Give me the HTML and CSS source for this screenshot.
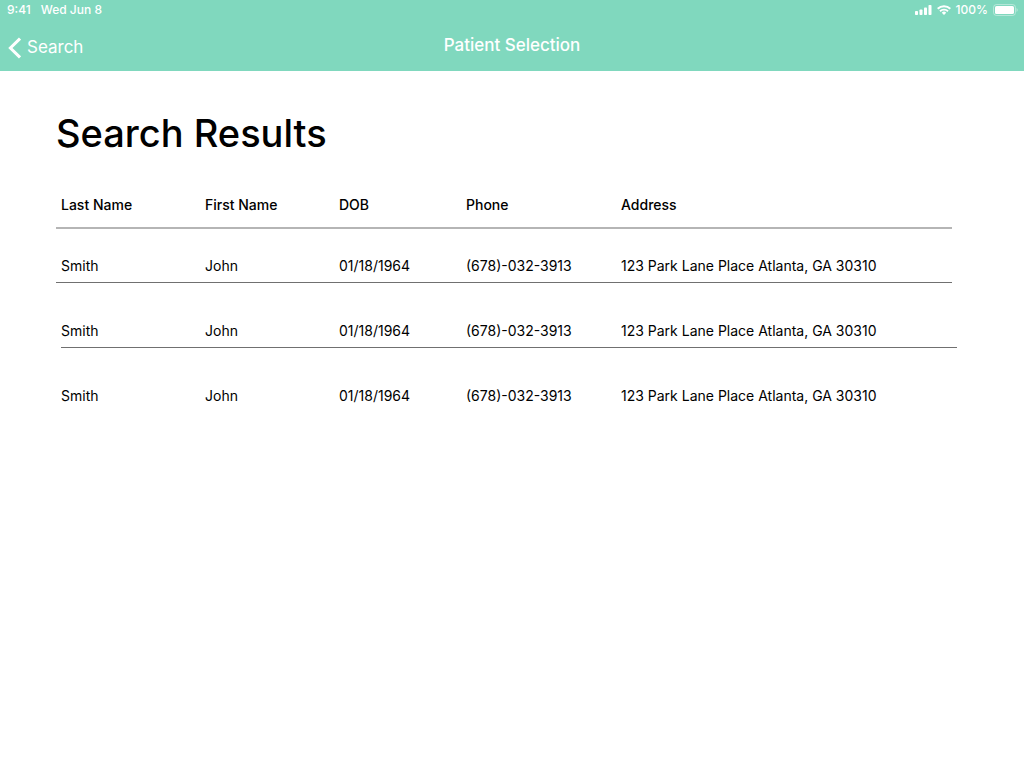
FILE: index.html
```html
<!DOCTYPE html>
<html lang="en">

  <head>
    <meta charset="utf-8">
    <meta name="viewport" content="width=device-width, initial-scale=1">
    <title>Patient Selection</title>
    <link rel="stylesheet" href="styles.css">
  </head>

  <body>
    <header class="header">
      <div class="status">
        <span>9:41</span>
        <span>Wed Jun 8</span>
        <div class="status-right">
          <svg width="17" height="10" viewBox="0 0 17 10" fill="#fff">
            <rect x="0" y="6" width="3" height="4" rx="0.8"/>
            <rect x="4.5" y="4.5" width="3" height="5.5" rx="0.8"/>
            <rect x="9" y="2.5" width="3" height="7.5" rx="0.8"/>
            <rect x="13.5" y="0" width="3" height="10" rx="0.8"/>
          </svg>
          <svg width="14" height="10" viewBox="0 0 14 10" fill="none" stroke="#fff" stroke-width="1.9">
            <path d="M0.7 3.8a9 9 0 0 1 12.6 0"/>
            <path d="M3 6.3a5.7 5.7 0 0 1 8 0"/>
            <path d="M7 10L4.8 7.8a3 3 0 0 1 4.4 0z" fill="#fff" stroke="none"/>
          </svg>
          <span>100%</span>
          <svg width="25" height="12" viewBox="0 0 25 12">
            <rect x="0.5" y="0.5" width="22" height="11" rx="3" fill="none" stroke="#fff" stroke-opacity="0.4"/>
            <rect x="2" y="2" width="19" height="8" rx="1.6" fill="#fff"/>
            <path d="M23.5 4v4a2.2 2.2 0 0 0 0-4z" fill="#fff" fill-opacity="0.4"/>
          </svg>
        </div>
      </div>
      <nav class="navbar">
        <a href="#" class="back">
          <svg width="13" height="22" viewBox="0 0 13 22" fill="none" stroke="#fff" stroke-width="3">
            <path d="M12 1.6L2.4 11L12 20.4"/>
          </svg>
          <span>Search</span>
        </a>
        <p class="title">Patient Selection</p>
      </nav>
    </header>

    <main class="content">
      <h1>Search Results</h1>
      <table class="results">
        <colgroup>
          <col class="last">
          <col class="first">
          <col class="dob">
          <col class="phone">
          <col>
        </colgroup>
        <thead>
          <tr>
            <th scope="col">Last Name</th>
            <th scope="col">First Name</th>
            <th scope="col">DOB</th>
            <th scope="col">Phone</th>
            <th scope="col">Address</th>
          </tr>
        </thead>
        <tbody>
          <tr>
            <td>Smith</td>
            <td>John</td>
            <td>01/18/1964</td>
            <td>(678)-032-3913</td>
            <td>123 Park Lane Place Atlanta, GA 30310</td>
          </tr>
          <tr>
            <td>Smith</td>
            <td>John</td>
            <td>01/18/1964</td>
            <td>(678)-032-3913</td>
            <td>123 Park Lane Place Atlanta, GA 30310</td>
          </tr>
          <tr>
            <td>Smith</td>
            <td>John</td>
            <td>01/18/1964</td>
            <td>(678)-032-3913</td>
            <td>123 Park Lane Place Atlanta, GA 30310</td>
          </tr>
        </tbody>
      </table>
    </main>
  </body>
</html>
```
FILE: styles.css
```css
body{
  margin:0;
  background-color:#fff;
  color:#000;
  font-family:Inter, sans-serif;
}

.header{
  background-color:#80d8be;
  color:#fff;
}

.status{
  display:flex;
  align-items:center;
  gap:10px;
  height:19px;
  padding:0 6px 0 7px;
  font-size:12px;
  font-weight:500;
}

.status-right{
  display:flex;
  align-items:center;
  gap:5px;
  margin-left:auto;
}

.navbar{
  display:grid;
  grid-template-columns:1fr auto 1fr;
  padding:14px 8px 10px;
  line-height:28px;
}

.back{
  display:flex;
  align-items:center;
  gap:6px;
  color:#fff;
  font-size:17px;
  text-decoration:none;
}

.back svg{
  margin-top:2px;
}

.title{
  margin:0;
  line-height:24px;
  font-size:17px;
  font-weight:500;
}

.content{
  padding:38px 67px 0 56px;
}

h1{
  margin:0;
  font-size:38px;
  font-weight:500;
  line-height:48px;
}

.results{
  width:100%;
  margin-top:33px;
  border-collapse:collapse;
  table-layout:fixed;
  font-size:14px;
  line-height:20px;
}

.last{
  width:144px;
}

.first{
  width:134px;
}

.dob{
  width:127px;
}

.phone{
  width:155px;
}

.results th{
  padding:5px 0 14px 5px;
  font-weight:500;
  text-align:left;
}

.results td{
  padding:38px 0 7px 5px;
}

.results tbody tr:first-child td{
  padding-top:27px;
}

/* row lines are a little shorter than the table */
.results tr{
  background:linear-gradient(#707070, #707070) left bottom / calc(100% - 5px) 1px no-repeat;
}

.results thead tr{
  background-image:linear-gradient(#b5b5b5, #b5b5b5);
  background-size:calc(100% - 5px) 2px;
}

.results tbody tr:nth-child(2){
  background-position:right bottom;
}

.results tbody tr:last-child{
  background:none;
}
```
